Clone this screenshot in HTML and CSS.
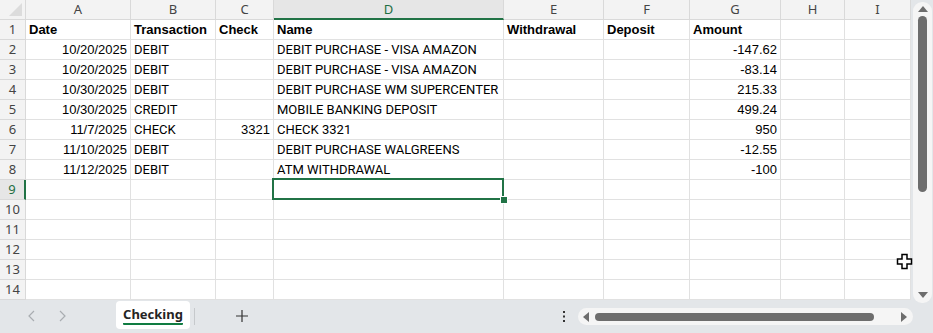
FILE: index.html
```html
<!DOCTYPE html>
<html lang="en">
  <head>
    <meta charset="UTF-8" />
    <title>Checking</title>
    <link rel="stylesheet" href="styles.css">
  </head>
  <body>
    <div class="app">
      <div class="main">
        <div class="sheet" id="sheet"></div>
        <div class="vscroll">
          <div class="vtrack">
            <span class="arrow up"></span>
            <span class="vthumb"></span>
            <span class="arrow down"></span>
          </div>
        </div>
      </div>

      <div class="tabbar">
        <div class="nav">
          <svg width="31" height="16" viewBox="0 0 31 16"><path d="M18 3 L13 8 L18 13" fill="none" stroke="#a9adb1" stroke-width="1.2"/></svg>
          <svg width="31" height="16" viewBox="0 0 31 16"><path d="M13 3 L18 8 L13 13" fill="none" stroke="#a9adb1" stroke-width="1.2"/></svg>
        </div>
        <div class="tab"><span class="tab-label">Checking</span></div>
        <span class="tab-sep"></span>
        <div class="add-sheet">
          <svg width="14" height="14" viewBox="0 0 14 14"><path d="M7 1 V13 M1 7 H13" stroke="#333" stroke-width="1.2"/></svg>
        </div>
        <div class="more">
          <svg width="4" height="14" viewBox="0 0 4 14"><rect x="1" y="2" width="2" height="2" fill="#333"/><rect x="1" y="6.5" width="2" height="2" fill="#333"/><rect x="1" y="11" width="2" height="2" fill="#333"/></svg>
        </div>
        <div class="hscroll">
          <span class="arrow left"></span>
          <span class="hthumb"></span>
          <span class="arrow right"></span>
        </div>
      </div>

      <svg class="pointer" width="17" height="17" viewBox="0 0 17 17">
        <path d="M6 1.5 H11 V6 H15.5 V11 H11 V15.5 H6 V11 H1.5 V6 H6 Z" fill="#fff" stroke="#000" stroke-width="1.5"/>
      </svg>
    </div>

    <script>
// column letters and the data in the sheet
const columns = ["A", "B", "C", "D", "E", "F", "G", "H", "I"];
const headers = ["Date", "Transaction", "Check", "Name", "Withdrawal", "Deposit", "Amount", "", ""];
const rows = [
  ["10/20/2025", "DEBIT", "", "DEBIT PURCHASE - VISA AMAZON", "", "", "-147.62"],
  ["10/20/2025", "DEBIT", "", "DEBIT PURCHASE - VISA AMAZON", "", "", "-83.14"],
  ["10/30/2025", "DEBIT", "", "DEBIT PURCHASE WM SUPERCENTER", "", "", "215.33"],
  ["10/30/2025", "CREDIT", "", "MOBILE BANKING DEPOSIT", "", "", "499.24"],
  ["11/7/2025", "CHECK", "3321", "CHECK 3321", "", "", "950"],
  ["11/10/2025", "DEBIT", "", "DEBIT PURCHASE WALGREENS", "", "", "-12.55"],
  ["11/12/2025", "DEBIT", "", "ATM WITHDRAWAL", "", "", "-100"]
];
const numberCols = [0, 2, 6];
const selRow = 9, selCol = 3;

const sheet = document.getElementById('sheet');

function addCell(text, cls) {
  const div = document.createElement('div');
  div.className = cls;
  div.textContent = text;
  sheet.appendChild(div);
  return div;
}

// header row
addCell("", "corner");
columns.forEach((c, i) => {
  addCell(c, i === selCol ? "col-head active" : "col-head");
});

// body rows
for (let r = 1; r <= 14; r++) {
  addCell(r, r === selRow ? "row-head active" : "row-head");
  columns.forEach((c, i) => {
    let text = "";
    let cls = "cell";
    if (r === 1) {
      text = headers[i];
      cls += " bold";
    } else if (rows[r - 2]) {
      text = rows[r - 2][i] || "";
      cls += numberCols.includes(i) ? " num" : " txt";
    }
    if (r === selRow && i === selCol) cls += " selected";
    addCell(text, cls);
  });
}
    </script>
  </body>
</html>
```

FILE: styles.css
```css
body {
  margin: 0;
  background: #fff;
  font-family: "Liberation Sans", Arial, sans-serif;
}

.app {
  position: relative;
  width: 933px;
  height: 333px;
  overflow: hidden;
  background: #e3e6e9;
}

.main {
  display: flex;
  height: 300px;
}

.sheet {
  display: grid;
  grid-template-columns: 26px 105px 85px 58px 230px 100px 86px 91px 64px 66px;
  grid-auto-rows: 20px;
  width: 911px;
  background: #fff;
  overflow: hidden;
}

.corner,
.col-head,
.row-head,
.cell {
  box-sizing: border-box;
  border-right: 1px solid #e1e1e1;
  border-bottom: 1px solid #e1e1e1;
  white-space: nowrap;
  overflow: hidden;
}

.corner {
  position: relative;
  background: #f3f3f3;
  border-color: #d9d9d9;
}

.corner::after {
  content: "";
  position: absolute;
  right: 3px;
  bottom: 3px;
  border-left: 13px solid transparent;
  border-bottom: 13px solid #dcdcdc;
}

.col-head,
.row-head {
  background: #f3f3f3;
  border-color: #d9d9d9;
  color: #444;
  font-family: "Noto Sans", "Open Sans", sans-serif;
  font-size: 13px;
  text-align: center;
  line-height: 19px;
}

.col-head.active {
  background: #e6e6e6;
  color: #1e6e42;
  border-bottom: 2px solid #217346;
}

.row-head.active {
  background: #e6e6e6;
  color: #1e6e42;
  border-right: 2px solid #217346;
}

.cell {
  font-size: 13px;
  line-height: 20px;
  color: #000;
  padding: 0 3px;
}

.cell.bold {
  font-weight: bold;
}

.cell.txt {
  font-family: Roboto, "Liberation Sans", sans-serif;
}

.cell.num {
  text-align: right;
}

.cell.selected {
  position: relative;
  overflow: visible;
}

.cell.selected::before {
  content: "";
  position: absolute;
  left: -2px;
  top: -2px;
  right: -1px;
  bottom: -1px;
  border: 2px solid #217346;
}

.cell.selected::after {
  content: "";
  position: absolute;
  right: -5px;
  bottom: -5px;
  width: 6px;
  height: 6px;
  background: #217346;
  border: 1px solid #fff;
}

/* vertical scroll bar */
.vscroll {
  width: 22px;
  padding: 2px 1px 0 2px;
  box-sizing: border-box;
}

.vtrack {
  display: flex;
  flex-direction: column;
  align-items: center;
  height: 301px;
  background: #f5f5f5;
  border-radius: 9px;
}

.vthumb {
  width: 9px;
  height: 176px;
  background: #6d6d6d;
  border-radius: 5px;
  margin-top: 4px;
}

.arrow {
  width: 0;
  height: 0;
}

.arrow.up {
  margin-top: 4px;
  border-left: 5px solid transparent;
  border-right: 5px solid transparent;
  border-bottom: 6px solid #6d6d6d;
}

.arrow.down {
  margin-top: auto;
  margin-bottom: 5px;
  border-left: 5px solid transparent;
  border-right: 5px solid transparent;
  border-top: 6px solid #6d6d6d;
}

/* sheet tabs */
.tabbar {
  display: flex;
  align-items: flex-start;
  height: 33px;
  padding-left: 16px;
}

.nav {
  display: flex;
  margin-top: 8px;
}

.tab {
  margin-left: 38px;
  margin-top: 1px;
  width: 74px;
  height: 28px;
  background: #fff;
  border-radius: 4px;
  display: flex;
  justify-content: center;
}

.tab-label {
  font-family: "Noto Sans", sans-serif;
  font-weight: bold;
  font-size: 13px;
  color: #242424;
  line-height: 26px;
  height: 22px;
  border-bottom: 2px solid #107c41;
  border-radius: 1px;
}

.tab-sep {
  width: 1px;
  height: 17px;
  margin: 8px 0 0 4px;
  background: #c6c9cc;
}

.add-sheet {
  margin: 9px 0 0 40px;
}

.more {
  margin: 9px 0 0 313px;
}

.hscroll {
  display: flex;
  align-items: center;
  margin: 8px 0 0 12px;
  width: 335px;
  height: 17px;
  background: #f5f5f5;
  border-radius: 9px;
}

.arrow.left {
  margin-left: 5px;
  border-top: 5px solid transparent;
  border-bottom: 5px solid transparent;
  border-right: 6px solid #6d6d6d;
}

.hthumb {
  margin-left: 6px;
  width: 279px;
  height: 8px;
  background: #6d6d6d;
  border-radius: 4px;
}

.arrow.right {
  margin-left: auto;
  margin-right: 6px;
  border-top: 5px solid transparent;
  border-bottom: 5px solid transparent;
  border-left: 6px solid #6d6d6d;
}

.pointer {
  position: absolute;
  left: 896px;
  top: 253px;
}
```
